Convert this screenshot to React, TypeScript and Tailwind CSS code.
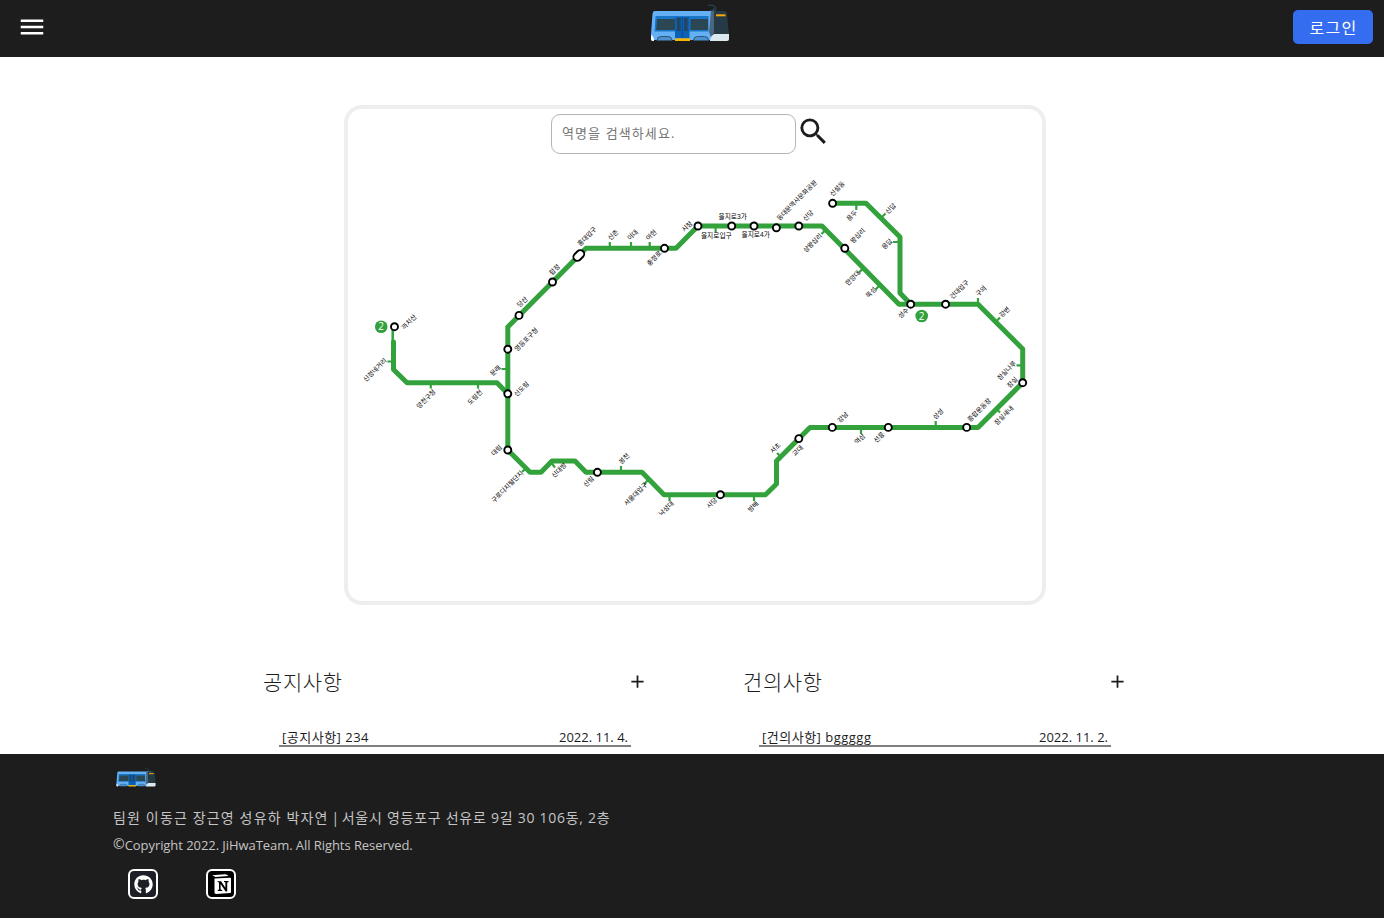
import React from "react";
import { MdAdd, MdMenu, MdSearch } from "react-icons/md";
import { FaGithub } from "react-icons/fa";

type Label = [name: string, x: number, y: number, flat?: boolean];

const LABELS: Label[] = [
  ["까치산", 409, 322],
  ["신정네거리", 375, 370],
  ["양천구청", 426, 399],
  ["도림천", 475, 397.3],
  ["신도림", 521.5, 389],
  ["문래", 495.3, 370.5],
  ["영등포구청", 526.3, 339.5],
  ["당산", 522.3, 302],
  ["합정", 554.7, 269.7],
  ["홍대입구", 587, 236.3],
  ["신촌", 613, 235],
  ["이대", 632.7, 235],
  ["아현", 651.3, 235],
  ["충정로", 654.3, 258.3],
  ["시청", 687, 226.5],
  ["을지로입구", 716.8, 235.7, true],
  ["을지로3가", 733.2, 216.7, true],
  ["을지로4가", 756.2, 234.8, true],
  ["동대문역사문화공원", 796.8, 200.3],
  ["신당", 808, 215.7],
  ["신설동", 837.3, 188.7],
  ["용두", 851.9, 215.7],
  ["상왕십리", 812.7, 243],
  ["왕십리", 857.7, 235.7],
  ["한양대", 852.8, 278],
  ["뚝섬", 871, 292.3],
  ["신답", 890.5, 208.7],
  ["용답", 887.2, 244],
  ["성수", 903.3, 313],
  ["건대입구", 959.3, 289.5],
  ["구의", 981, 291],
  ["강변", 1004.7, 312],
  ["잠실나루", 1006.7, 370.7],
  ["잠실", 1012.3, 382.3],
  ["잠실새내", 1003.9, 415.3],
  ["종합운동장", 979.3, 410],
  ["삼성", 938, 414],
  ["선릉", 879, 437.3],
  ["역삼", 859.9, 439],
  ["강남", 842.9, 417.3],
  ["교대", 797.7, 450.7],
  ["서초", 775.3, 448],
  ["방배", 753, 506.7],
  ["사당", 711.8, 503],
  ["낙성대", 666.3, 508.5],
  ["서울대입구", 635.7, 494],
  ["봉천", 624, 458.7],
  ["신림", 588.7, 481.7],
  ["신대방", 558.9, 470.3],
  ["구로디지털단지", 507.3, 486.7],
  ["대림", 496.5, 450.3],
];

const TRANSFERS: [number, number][] = [
  [394.5, 326.7], [507.8, 393.8], [507.8, 349.2], [519, 315.4], [552.5, 282],
  [664.5, 248.3], [698, 226], [731.7, 226], [754, 226], [776.4, 227.8],
  [798.8, 226], [832.6, 203.3], [844.8, 248.3], [910.7, 304.2], [945.6, 304.2],
  [1022.7, 382.7], [966.7, 427.4], [888.3, 427.4], [832.3, 427.4], [798.8, 438.6],
  [720.4, 494.7], [597.4, 472.3], [507.8, 450],
];

const TICKS =
  "M609.8 247v-5M631 247v-5M649.7 247v-5M715.6 227v5.5M856.3 204v6M881 218l4.5-4.5M899 242h-6" +
  "M825.5 230l-4 4M863.5 268l-4.5 4.5M880 285l-4.500 4.500M978 303v-5M995.500 322l4.500-4.500M1022 365.300h-5.500" +
  "M996 408.500l4 4M935.700 427v-6M861 428v6M781 457l-4-4M754 495v6M669.500 495v6M648 480l-4 4.500" +
  "M621 472v-6M551.500 463l3.500 4.500M526 468l-4 4M507 369h-5.500M393 361.500h-5.500M430.800 383v5.500M478 383v5.500";

function Train({ className }: { className: string }) {
  return (
    <svg viewBox="0 0 80 40" className={className} aria-hidden="true">
      <path d="M58 1.300h5l3 2.500-4 2.500h4" fill="none" stroke="#263d49" strokeWidth="1.500" />
      <path d="M4.500 7h65a6 6 0 0 1 6 5l3 19v5H1V30L2.500 10q.3-3 2-3z" fill="#64b0f5" />
      <path d="M62 7h12q2.500 0 3 3l2 22-17 1-2-7z" fill="#263a45" />
      <path d="M61 7h3v22l-3 4-2-5z" fill="#4b657c" />
      <path d="M64 30h15v5q0 2-2 2H60q0-4 4-7z" fill="#dce8f0" />
      <path d="M5.500 12h53v15.500H4.500z" fill="#1976c8" />
      <path d="M7 15h18v11H6.200zM40.500 15H58v11H40.500z" fill="#2c4754" />
      <path d="M25 13h14.500v21.500H25z" fill="#0b62b4" />
      <path d="M27 14h3.600v13H27zM34 14h3.600v13H34z" fill="#24455f" />
      <path d="M32.300 13v21" stroke="#073b78" strokeWidth=".6" />
      <path d="M25 34.300h15V37H25z" fill="#f7b500" />
      <path d="M7 36.500q0-4 4-4h7q4 0 4 4M43.500 36.500q0-4 4-4h7q4 0 4 4" fill="#4e91d0" stroke="#2d577b" />
      <path d="M1 31q3 1 3 6H2.500Q1 37 1 35z" fill="#fff" />
      <path d="M66 10.300h9.500v2H66z" fill="#f7a900" />
    </svg>
  );
}

function NotionMark() {
  return (
    <svg viewBox="0 0 26 26" className="size-[26px]" aria-hidden="true">
      <path d="M4.200 4.200 17 3.200q1 0 1.800.6L20.500 5 7.500 6z" fill="#fff" />
      <path d="M6.500 7.600 22 6.700q1 0 1 1V21q0 1-1 1L8 22.900q-1.500 0-1.500-1.400z" fill="#fff" />
      <path
        d="M9.500 10.300h3.600l4.300 6.500v-5.500l-1.400-.4v-1h4.500v1l-1.300.5v9h-1.600l-5-7.500v5.700l1.600.5v1H9.700v-1l1.300-.5v-7l-1.500-.5z"
        fill="#000"
      />
    </svg>
  );
}

function SubwayMap() {
  return (
    <svg viewBox="348 165 694 380" className="mt-[11px] h-[380px] w-[694px] shrink-0">
      <g fill="none" stroke="#33a23d" strokeWidth="5" strokeLinejoin="round">
        <path d="M507.800 394V327L586 248.300H676L698 226H822L899 304.200H978L1022.700 349V382.700L978 427.400H810L776.500 461V484L765.500 494.700H664L642 472.300H586L575 461H552L541 472.300H530L507.800 450z" />
        <path d="M832.600 203.300H866L900 237V293L910.700 304.200" />
        <path d="M393.500 342V369.500L407 382.700H497L507.800 393.800" strokeLinecap="round" />
        <path d="M392.700 328v15" strokeWidth="2.500" />
        <path d={TICKS} strokeWidth="2.200" />
      </g>
      <g fill="#fff" stroke="#000" strokeWidth="1.900">
        {TRANSFERS.map(([x, y]) => (
          <circle key={`${x}-${y}`} cx={x} cy={y} r="3.500" />
        ))}
        <rect x="572.800" y="251.600" width="12" height="7.800" rx="3.900" transform="rotate(-45 578.800 255.500)" />
      </g>
      <g className="font-['Liberation_Sans','Noto_Sans_CJK_KR',sans-serif]" textAnchor="middle">
        {LABELS.map(([name, x, y, flat]) => (
          <text
            key={name}
            fontSize={flat ? 6.7 : 6.5}
            fill="#000"
            transform={`translate(${flat ? x - 0.5 : x} ${y}) rotate(${flat ? 0 : -45})`}
            y="2.300"
          >
            {name}
          </text>
        ))}
      </g>
      {[[381.2, 326.7], [921.7, 316]].map(([x, y]) => (
        <g key={x}>
          <circle cx={x} cy={y} r="6.300" fill="#33a23d" />
          <text x={x} y={y + 3.5} textAnchor="middle" fontSize="10" fill="#fff" className="font-['Open_Sans',sans-serif]">
            2
          </text>
        </g>
      ))}
    </svg>
  );
}

function Board({ title, post, date }: { title: string; post: string; date: string }) {
  return (
    <section className="w-[384px]">
      <div className="flex h-6 items-center justify-between">
        <h2 className="text-[21px] leading-6 font-light tracking-[0.6px]">{title}</h2>
        <MdAdd className="mb-[2px] size-[21px] -mr-px" />
      </div>
      <div className="mt-[35px] ml-4 flex h-[18px] w-[352px] justify-between border-b-2 border-[#7d807f] px-[3px] text-[13px] leading-4">
        <span className="tracking-[0.5px]">{post}</span>
        <span>{date}</span>
      </div>
    </section>
  );
}

export default function App() {
  return (
    <div className="flex h-[918px] flex-col overflow-hidden bg-white font-['Open_Sans','Noto_Sans_CJK_KR',sans-serif] text-[#1d1d1d]">
      <header className="grid h-[57px] shrink-0 grid-cols-3 items-start bg-[#1d1d1d] text-white">
        <MdMenu className="mt-[12px] ml-[17px] size-[30px]" />
        <Train className="mt-1 mr-[4px] h-[40px] w-[80px] justify-self-center" />
        <button className="mt-[10px] mr-[11px] h-[34px] w-[80px] justify-self-end rounded-[5px] bg-[#356df1] pl-px text-[16px] leading-[36px] tracking-[1.3px]">
          로그인
        </button>
      </header>

      <main className="flex grow flex-col">
        <div className="mt-12 ml-[344px] flex h-[500px] w-[702px] flex-col rounded-[18px] border-4 border-[#eee]">
          <div className="mt-[5px] ml-[203px] flex h-[40px] shrink-0">
            <input
              placeholder="역명을 검색하세요."
              className="h-[40px] w-[245px] rounded-[9px] border border-[#b5b5b5] px-[10px] pb-[3px] text-[13px] tracking-[1.1px] outline-none placeholder:text-[#757575]"
            />
            <MdSearch className="size-[35px]" />
          </div>
          <SubwayMap />
        </div>
        <div className="mt-[65px] ml-[263px] flex gap-24">
          <Board title="공지사항" post="[공지사항] 234" date="2022. 11. 4." />
          <Board title="건의사항" post="[건의사항] bggggg" date="2022. 11. 2." />
        </div>
      </main>

      <footer className="flex h-[164px] shrink-0 flex-col bg-[#1d1d1d] pl-[113px] text-[#c4c4c4]">
        <Train className="mt-[14px] ml-[3px] h-[20px] w-[40px]" />
        <p className="mt-[20px] text-[14px] leading-5 tracking-[0.73px]">
          <span className="tracking-[1.15px]">팀원 이동근 장근영 성유하 박자연</span>
          <span className="tracking-[-0.6px]"> | </span>
          서울시 영등포구 선유로 9길 30 106동, 2층
        </p>
        <p className="mt-[7px] flex text-[13px] leading-5">
          <span className="relative -top-px text-[14px]">©</span>
          <span className="tracking-[-0.06px]">Copyright 2022. JiHwaTeam. All Rights Reserved.</span>
        </p>
        <div className="mt-[14px] ml-[15px] flex gap-12 text-white">
          <span className="flex size-[30px] items-center justify-center rounded-md border-2 border-white bg-[#1c2026]">
            <FaGithub className="size-[19px]" />
          </span>
          <span className="flex size-[30px] items-center justify-center rounded-md border-2 border-white bg-black">
            <NotionMark />
          </span>
        </div>
      </footer>
    </div>
  );
}
